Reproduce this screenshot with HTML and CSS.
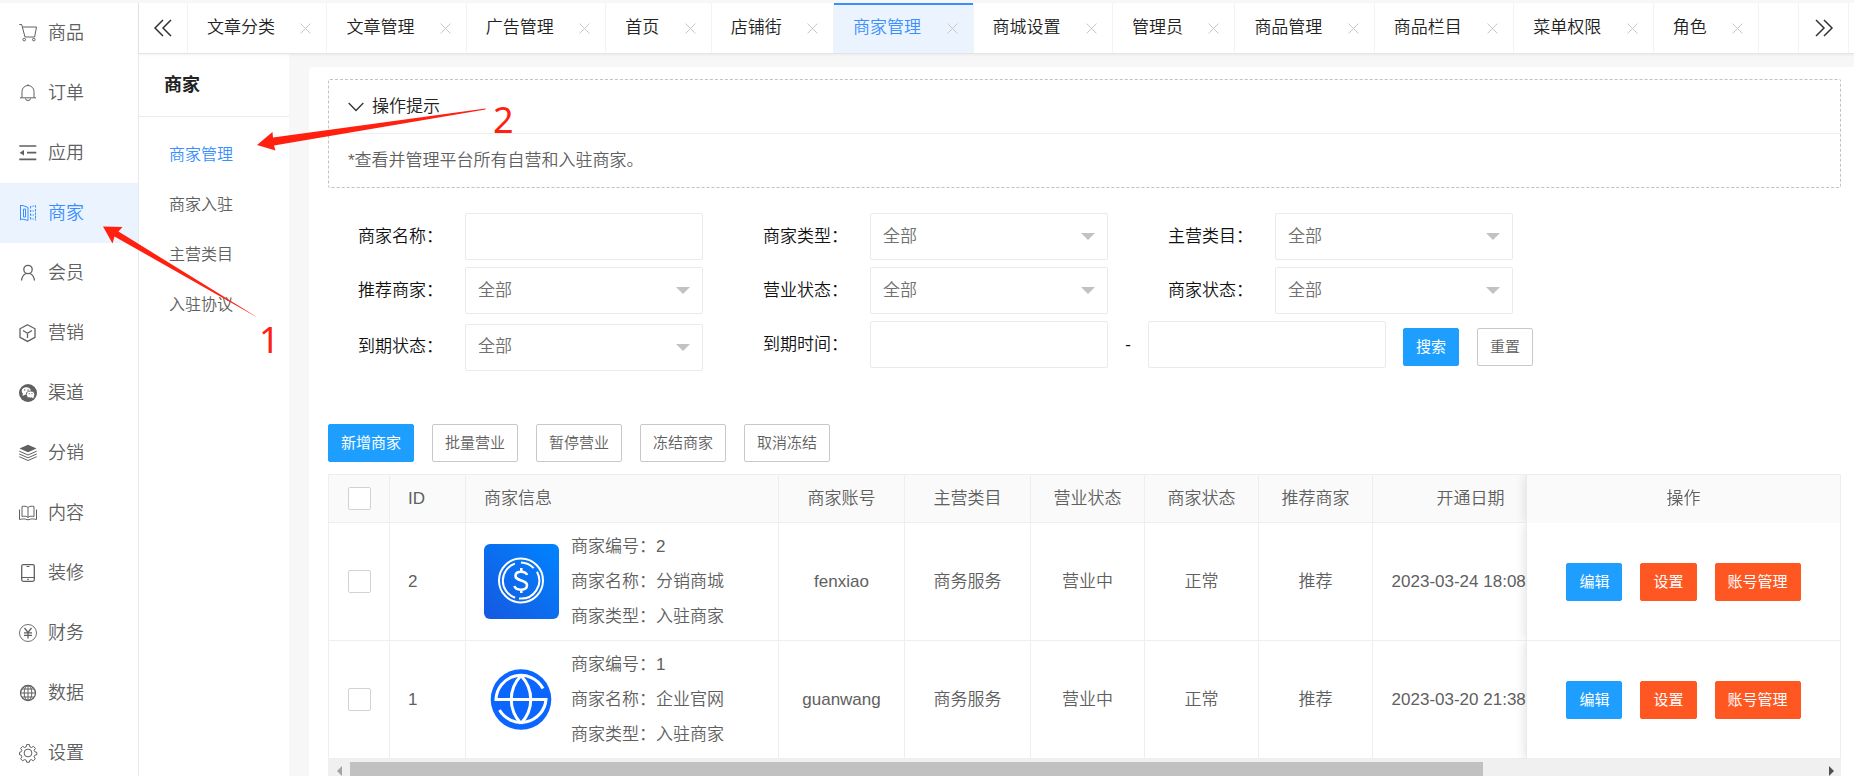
FILE: index.html
```html
<!DOCTYPE html>
<html lang="zh-CN">
<head>
<meta charset="utf-8">
<title>商家管理</title>
<link rel="stylesheet" href="styles.css">
</head>
<body>
<div class="app">
  <nav class="sidebar">
    <a class="nav-item" href="#"><svg class="icon" viewBox="0 0 18 18"><path d="M.3.5h2.4L6 13h9.6l1.9-10H3.6"/><circle cx="5.2" cy="15.6" r="1.3"/><circle cx="14.8" cy="15.6" r="1.3"/></svg>商品</a>
    <a class="nav-item" href="#"><svg class="icon" viewBox="0 0 18 18"><path d="M1 13.8h16M3 13.5V7.500a6 6 0 0 1 12 0v6M9 .3v1.400M6.500 14.500a2.500 2 0 0 0 5 0"/></svg>订单</a>
    <a class="nav-item" href="#"><svg class="icon" viewBox="0 0 18 18"><path stroke-width="1.700" d="M.3 2h17M.3 15.300h17M8 8.700h9.300"/><path class="solid" d="M.6 8.700 5 6v5.400z"/></svg>应用</a>
    <a class="nav-item active" href="#"><svg class="icon" viewBox="0 0 18 18"><path d="M1.500 1v15.200M1.500 1.500h2.500l5 2v13l-5-1.300H1.500M4.500 5v8h2V5z"/><path stroke-dasharray="2 1.500" d="M11.500 2.500v14M16.500 1.500v15"/><path stroke-dasharray="1.500 1" d="M11 3l5.500-1.500M11 7h6M11 11h6M11 15h6"/></svg>商家</a>
    <a class="nav-item" href="#"><svg class="icon" viewBox="0 0 18 18"><circle cx="9" cy="5.500" r="4.200" stroke-width="1.300"/><path stroke-width="1.300" d="M2.500 16.500c.5-4.500 2.500-6 4.500-7M15.500 16.500c-.5-4.500-2.500-6-4.500-7"/></svg>会员</a>
    <a class="nav-item" href="#"><svg class="icon" viewBox="0 0 18 18"><path stroke-width="1.300" d="M8.500.8 16 4.800v8.600l-7.500 4-7.500-4V4.800zM4 6.500l4.500 2.700L13 6.500M8.500 9.200V14"/></svg>营销</a>
    <a class="nav-item" href="#"><svg class="icon" viewBox="0 0 18 18"><circle class="solid" cx="9" cy="9" r="9"/><ellipse class="white" cx="7.300" cy="7" rx="4.600" ry="3.800"/><path class="white" d="M4 9l-.5 3 3-1.500z"/><ellipse class="white edge" cx="11.500" cy="10.500" rx="4.200" ry="3.500"/><path class="white" d="M12.500 13l2 1.500v-3z"/><circle class="solid" cx="5.800" cy="6" r=".7"/><circle class="solid" cx="9" cy="6" r=".7"/><circle class="solid" cx="10.200" cy="9.700" r=".6"/><circle class="solid" cx="13" cy="9.700" r=".6"/></svg>渠道</a>
    <a class="nav-item" href="#"><svg class="icon" viewBox="0 0 18 18"><path class="solid" d="M9 .8 17.500 4.500 9 8.300.5 4.500z"/><path d="M.3 7.200 9 11l8.700-3.800M.3 10 9 13.800 17.700 10M.3 12.700 9 16.500l8.700-3.800"/></svg>分销</a>
    <a class="nav-item" href="#"><svg class="icon" viewBox="0 0 18 18"><path d="M9 3.500C8 2 4 2 3 2.500v10c2-.5 5-.5 6 1 1-1.500 4-1.500 6-1v-10C14 2 10 2 9 3.500v10M.5 5.500v10c3-.8 6-.8 7.500.2h2c1.500-1 4.500-1 7.500-.2v-10"/></svg>内容</a>
    <a class="nav-item" href="#"><svg class="icon" viewBox="0 0 18 18"><rect x="2.700" y=".7" width="12.600" height="16.600" rx="1.500" stroke-width="1.300"/><path d="M3 13.500h12M7.500 2.500h3M8 15.300h2"/></svg>装修</a>
    <a class="nav-item" href="#"><svg class="icon" viewBox="0 0 18 18"><circle cx="9" cy="9" r="8.500" stroke-width=".9"/><path stroke-width="1.300" d="M5.500 4 9 8.500 12.500 4M9 8.500v6M5 8.800h8M5 11.300h8"/></svg>财务</a>
    <a class="nav-item" href="#"><svg class="icon" viewBox="0 0 18 18"><circle cx="9" cy="9" r="7.500" stroke-width="1.300"/><ellipse cx="9" cy="9" rx="3.800" ry="7.500"/><path d="M9 1.500v15M1.500 9h15M3 5h12M3 13h12"/></svg>数据</a>
    <a class="nav-item" href="#"><svg class="icon" viewBox="0 0 18 18"><circle cx="9" cy="9" r="3.900"/><path d="M7.600.6h2.800l.5 2.300 1.500.6 2-1.200 2 2-1.300 2 .7 1.500 2 .5v2.400l-2 .5-.7 1.600 1.200 2-2 2-2-1.200-1.500.6-.4 2H7.600l-.5-2-1.500-.6-2 1.200-2-2 1.300-2-.7-1.600-1.700-.5V8.300l1.700-.5.7-1.500-1.300-2 2-2 2 1.200 1.500-.6z"/></svg>设置</a>
  </nav>

  <div class="workspace">
    <header class="tabbar">
      <button class="tab-arrow" type="button" aria-label="向左"><svg class="glyph" viewBox="0 0 20 20"><path d="M10 2 2 10l8 8M18 2l-8 8 8 8"/></svg></button>
      <div class="tabs">
        <a class="tab" href="#">文章分类<svg class="close" viewBox="0 0 11 11"><path d="M.5.5l10 10M10.500.5l-10 10"/></svg></a>
        <a class="tab" href="#">文章管理<svg class="close" viewBox="0 0 11 11"><path d="M.5.5l10 10M10.500.5l-10 10"/></svg></a>
        <a class="tab" href="#">广告管理<svg class="close" viewBox="0 0 11 11"><path d="M.5.5l10 10M10.500.5l-10 10"/></svg></a>
        <a class="tab" href="#">首页<svg class="close" viewBox="0 0 11 11"><path d="M.5.5l10 10M10.500.5l-10 10"/></svg></a>
        <a class="tab" href="#">店铺街<svg class="close" viewBox="0 0 11 11"><path d="M.5.5l10 10M10.500.5l-10 10"/></svg></a>
        <a class="tab active" href="#">商家管理<svg class="close" viewBox="0 0 11 11"><path d="M.5.5l10 10M10.500.5l-10 10"/></svg></a>
        <a class="tab" href="#">商城设置<svg class="close" viewBox="0 0 11 11"><path d="M.5.5l10 10M10.500.5l-10 10"/></svg></a>
        <a class="tab" href="#">管理员<svg class="close" viewBox="0 0 11 11"><path d="M.5.5l10 10M10.500.5l-10 10"/></svg></a>
        <a class="tab" href="#">商品管理<svg class="close" viewBox="0 0 11 11"><path d="M.5.5l10 10M10.500.5l-10 10"/></svg></a>
        <a class="tab" href="#">商品栏目<svg class="close" viewBox="0 0 11 11"><path d="M.5.5l10 10M10.500.5l-10 10"/></svg></a>
        <a class="tab" href="#">菜单权限<svg class="close" viewBox="0 0 11 11"><path d="M.5.5l10 10M10.500.5l-10 10"/></svg></a>
        <a class="tab" href="#">角色<svg class="close" viewBox="0 0 11 11"><path d="M.5.5l10 10M10.500.5l-10 10"/></svg></a>
      </div>
      <button class="tab-arrow last" type="button" aria-label="向右"><svg class="glyph" viewBox="0 0 20 20"><path d="M2 2l8 8-8 8M10 2l8 8-8 8"/></svg></button>
    </header>

    <div class="columns">
      <nav class="submenu">
        <h2 class="submenu-title">商家</h2>
        <a class="submenu-item active" href="#">商家管理</a>
        <a class="submenu-item" href="#">商家入驻</a>
        <a class="submenu-item" href="#">主营类目</a>
        <a class="submenu-item" href="#">入驻协议</a>
      </nav>

      <main class="card">
        <section class="tips">
          <h3 class="tips-title"><svg class="chevron" viewBox="0 0 16 10"><path d="M.7 1 8 8.500 15.300 1"/></svg>操作提示</h3>
          <p class="tips-body">*查看并管理平台所有自营和入驻商家。</p>
        </section>

        <form class="filters">
          <div class="filter-row">
            <div class="field"><label for="name">商家名称：</label><input class="control" id="name" type="text"></div>
            <div class="field"><label for="type">商家类型：</label><span class="select"><select class="control" id="type"><option>全部</option></select></span></div>
            <div class="field"><label for="cat">主营类目：</label><span class="select"><select class="control" id="cat"><option>全部</option></select></span></div>
          </div>
          <div class="filter-row">
            <div class="field"><label for="rec">推荐商家：</label><span class="select"><select class="control" id="rec"><option>全部</option></select></span></div>
            <div class="field"><label for="open">营业状态：</label><span class="select"><select class="control" id="open"><option>全部</option></select></span></div>
            <div class="field"><label for="state">商家状态：</label><span class="select"><select class="control" id="state"><option>全部</option></select></span></div>
          </div>
          <div class="filter-row tall">
            <div class="field"><label for="exp">到期状态：</label><span class="select"><select class="control" id="exp"><option>全部</option></select></span></div>
            <div class="field range"><label for="from">到期时间：</label><input class="control" id="from" type="text"><span class="dash">-</span><input class="control" type="text" aria-label="到期时间止"></div>
            <div class="buttons"><button class="btn primary" type="button">搜索</button><button class="btn" type="button">重置</button></div>
          </div>
        </form>

        <div class="buttons toolbar">
          <button class="btn primary" type="button">新增商家</button>
          <button class="btn" type="button">批量营业</button>
          <button class="btn" type="button">暂停营业</button>
          <button class="btn" type="button">冻结商家</button>
          <button class="btn" type="button">取消冻结</button>
        </div>

        <div class="table-box">
          <table class="table">
            <colgroup><col class="c-check"><col class="c-id"><col class="c-info"><col class="c-wide"><col class="c-wide"><col class="c-mid"><col class="c-mid"><col class="c-mid"><col class="c-date"><col><col class="c-act"></colgroup>
            <thead>
              <tr>
                <th><input class="check" type="checkbox" aria-label="全选"></th>
                <th class="left">ID</th>
                <th class="left">商家信息</th>
                <th>商家账号</th><th>主营类目</th><th>营业状态</th><th>商家状态</th><th>推荐商家</th><th>开通日期</th><th></th>
                <th class="fixed">操作</th>
              </tr>
            </thead>
            <tbody>
              <tr>
                <td><input class="check" type="checkbox" aria-label="选择 2"></td>
                <td class="left">2</td>
                <td class="left"><div class="merchant">
                  <svg class="logo" viewBox="0 0 75 75"><defs><linearGradient id="blue" x1="0" y1="1" x2="1" y2="0"><stop offset="0" stop-color="#1658e0"/><stop offset="1" stop-color="#0084ff"/></linearGradient></defs><rect width="75" height="75" rx="6" fill="url(#blue)"/><g fill="none" stroke="#fff" stroke-width="2"><circle cx="37" cy="36.500" r="22"/><path d="M36 54.500A18 18 0 0 0 52.500 27M32 54A18 18 0 0 1 30 20M36 18.500a18 18 0 0 1 13 5" transform="rotate(3 37 36.500)"/><path stroke-width="2.600" d="M43 31c-1-4-11-5-11.500.5C31 38 43.500 35 43 41.500c-.5 6-11.500 5-12.500.5M37.300 24v4M37.300 45v4"/></g></svg>
                  <div>商家编号：2<br>商家名称：分销商城<br>商家类型：入驻商家</div></div></td>
                <td>fenxiao</td><td>商务服务</td><td>营业中</td><td>正常</td><td>推荐</td><td>2023-03-24 18:08:12</td><td></td>
                <td class="fixed"><div class="buttons centered"><button class="btn primary" type="button">编辑</button><button class="btn danger" type="button">设置</button><button class="btn danger" type="button">账号管理</button></div></td>
              </tr>
              <tr>
                <td><input class="check" type="checkbox" aria-label="选择 1"></td>
                <td class="left">1</td>
                <td class="left"><div class="merchant">
                  <svg class="logo" viewBox="0 0 75 75"><circle cx="37" cy="37.500" r="30.300" fill="#0a66ff"/><g fill="none" stroke="#fff" stroke-width="3"><path d="M59 26.500A25 25 0 0 0 12 37.500H62A25 25 0 0 1 15.500 48"/><path d="M37 13.500c-13 14-13 34 0 48M37 13.500c13 14 13 34 0 48"/></g></svg>
                  <div>商家编号：1<br>商家名称：企业官网<br>商家类型：入驻商家</div></div></td>
                <td>guanwang</td><td>商务服务</td><td>营业中</td><td>正常</td><td>推荐</td><td>2023-03-20 21:38:45</td><td></td>
                <td class="fixed"><div class="buttons centered"><button class="btn primary" type="button">编辑</button><button class="btn danger" type="button">设置</button><button class="btn danger" type="button">账号管理</button></div></td>
              </tr>
            </tbody>
          </table>
        </div>
        <div class="scrollbar"><span class="arrow prev"></span><div class="track"><div class="thumb"></div></div><span class="arrow next"></span></div>
      </main>
    </div>
  </div>

  <svg class="notes" width="540" height="380" viewBox="0 0 540 380">
    <path d="M103 226.500 122.500 227 118.500 231.500 257.500 317.500 114.500 236.500 112.500 243.500z"/>
    <path d="M257 145 272.500 132 273 137.500 485.500 108.500v1L274 145.500 275.500 150.500z"/>
    <text x="259" y="353">1</text>
    <text x="493" y="133">2</text>
  </svg>
</div>
</body>
</html>
```
FILE: styles.css
```css
* { box-sizing: border-box; }
body {
  margin: 0;
  font: 350 17px/24px "Liberation Sans", "Noto Sans CJK SC", sans-serif;
  color: #606060;
  background: #f7f7f7;
}
a { color: inherit; text-decoration: none; }
button, input, select { font: inherit; color: inherit; }
svg { display: block; flex: none; }

.app {
  position: relative;
  display: flex;
  height: 100vh;
  overflow: hidden;
  border-top: 3px solid #f7f7f7;
}

.sidebar {
  flex: none;
  width: 139px;
  background: #fff;
  border-right: 1px solid #e8e8e8;
}
.nav-item {
  display: flex;
  align-items: center;
  gap: 11px;
  height: 60px;
  padding-left: 19px;
  font-size: 18px;
}
.nav-item.active { color: #3a8ffe; background: #ebf3ff; }
.icon { width: 18px; height: 18px; fill: none; stroke: currentColor; overflow: visible; }
.icon .solid { fill: currentColor; stroke: none; }
.icon .white { fill: #fff; stroke: none; }
.icon .edge { stroke: #666; stroke-width: 1; }

.workspace { flex: 1; min-width: 0; display: flex; flex-direction: column; }

.tabbar {
  position: relative;
  flex: none;
  display: flex;
  height: 51px;
  background: #fff;
  border-bottom: 1px solid #e4e4e4;
  box-shadow: 0 1px 3px rgba(0, 0, 0, .06);
  color: #222;
}
.tab-arrow {
  flex: none;
  display: flex;
  align-items: center;
  justify-content: center;
  width: 49px;
  padding: 0;
  border: 0;
  border-right: 1px solid #f3f3f3;
  background: none;
}
.tab-arrow.last { width: 51px; margin-right: 5px; border-left: 1px solid #f3f3f3; }
.glyph { width: 20px; height: 20px; fill: none; stroke: #333; stroke-width: 1.5; }
.tabs { flex: 1; min-width: 0; display: flex; padding-right: 39px; overflow: hidden; }
.tab {
  flex: 1 0 auto;
  display: flex;
  align-items: center;
  justify-content: space-between;
  gap: 24px;
  padding: 0 15px 0 19px;
  border-right: 1px solid #f3f3f3;
}
.tab.active { color: #3a8ffe; background: #ebf3ff; box-shadow: inset 0 2px #3a8ffe; }
.close { width: 11px; height: 11px; fill: none; stroke: #c8c8c8; }

.columns { flex: 1; min-height: 0; display: flex; }
.submenu { flex: none; width: 150px; background: #fff; }
.submenu-title {
  margin: 0 0 13px;
  padding: 0 25px;
  font-size: 18px;
  line-height: 62px;
  color: #222;
  border-bottom: 1px solid #ebebeb;
}
.submenu-item { display: block; padding-left: 30px; font-size: 16px; line-height: 50px; }
.submenu-item.active { color: #3a8ffe; }

.card {
  flex: 1;
  min-width: 0;
  margin: 13px 0 0 20px;
  padding: 12px 13px 0 19px;
  background: #fff;
  border-radius: 4px 0 0 0;
}
.tips { border: 1px dashed #c2c2c2; border-radius: 2px; }
.tips-title {
  display: flex;
  align-items: center;
  gap: 8px;
  margin: 0;
  padding-left: 19px;
  font-size: 17px;
  font-weight: 350;
  line-height: 53px;
  color: #222;
  border-bottom: 1px solid #eee;
}
.chevron { width: 16px; height: 10px; fill: none; stroke: #333; stroke-width: 1.300; }
.tips-body { margin: 0; padding-left: 19px; line-height: 53px; }

.filters { display: flex; flex-direction: column; gap: 7px; padding: 25px 0 51px 30px; }
.filter-row { display: flex; align-items: center; }
.filter-row.tall { min-height: 52px; }
.field { flex: none; display: flex; align-items: center; width: 405px; color: #111; }
.field label { width: 107px; }
.field.range { align-self: flex-start; width: auto; margin-right: 17px; }
.control {
  display: block;
  width: 238px;
  height: 47px;
  padding: 0 12px;
  background: #fff;
  border: 1px solid #eaeaea;
  border-radius: 2px;
  color: #707070;
}
.select { position: relative; }
.select select { appearance: none; }
.select::after {
  content: "";
  position: absolute;
  right: 13px;
  top: 20px;
  border: 7px solid transparent;
  border-top-color: #c2c2c2;
  border-bottom: 0;
  pointer-events: none;
}
.dash { width: 40px; text-align: center; }

.buttons { display: flex; gap: 18px; }
.buttons.centered { justify-content: center; }
.toolbar { margin-bottom: 12px; }
.btn {
  height: 38px;
  padding: 0 12px;
  font-size: 15px;
  line-height: 36px;
  background: #fff;
  border: 1px solid #c9c9c9;
  border-radius: 2px;
}
.btn.primary { color: #fff; background: #1e9fff; border-color: #1e9fff; font-weight: 400; }
.btn.danger { color: #fff; background: #ff5722; border-color: #ff5722; font-weight: 400; }

.table-box { overflow: hidden; border: 1px solid #eee; border-bottom: 0; }
.table { width: 1957px; table-layout: fixed; border-collapse: separate; border-spacing: 0; }
.c-check { width: 61px; }
.c-id { width: 76px; }
.c-info { width: 313px; }
.c-wide { width: 126px; }
.c-mid { width: 114px; }
.c-date { width: 196px; }
.c-act { width: 314px; }
.table th, .table td {
  padding: 0;
  font-weight: 350;
  text-align: center;
  white-space: nowrap;
  border-right: 1px solid #eee;
  border-bottom: 1px solid #eee;
}
.table th { height: 48px; background: #fafafa; }
.table td { height: 118px; background: #fff; }
.table .left { text-align: left; padding-left: 18px; }
.table .fixed {
  position: sticky;
  right: 0;
  border-left: 1px solid #eaeaea;
  border-right: 0;
  box-shadow: -1px 0 10px rgba(0, 0, 0, .12);
  clip-path: inset(0 0 0 -12px);
}
.table th.fixed { border-bottom-color: #fafafa; }
.merchant { display: flex; align-items: center; gap: 12px; line-height: 35px; }
.logo { width: 75px; height: 75px; }
.check {
  appearance: none;
  display: block;
  width: 23px;
  height: 23px;
  margin: 0 auto;
  background: #fff;
  border: 1px solid #d2d2d2;
  border-radius: 2px;
}

.scrollbar { display: flex; align-items: center; height: 21px; padding: 3px 7px 0 9px; background: #f0f0f0; }
.track { flex: 1; padding: 0 8px; }
.thumb { width: 77%; height: 18px; background: #c1c1c1; }
.arrow { border: 5px solid transparent; }
.arrow.prev { border-left: 0; border-right-color: #a3a3a3; }
.arrow.next { border-right: 0; border-left-color: #505050; }

.notes { position: absolute; left: 0; top: -3px; fill: #ff2010; pointer-events: none; }
.notes text { font: 36px "Noto Sans", sans-serif; }
```
